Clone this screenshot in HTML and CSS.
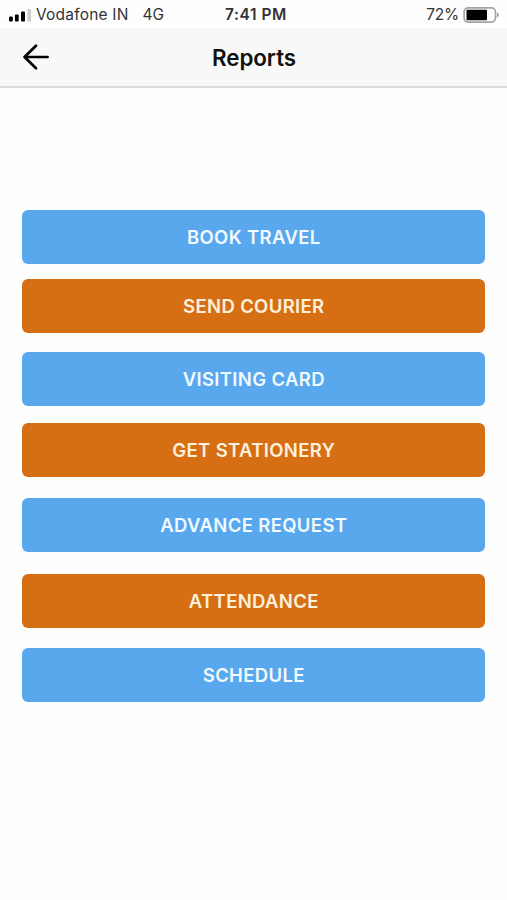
FILE: index.html
```
<!DOCTYPE html>
<html lang="en">
  <head>
    <meta charset="UTF-8" />
    <meta name="viewport" content="width=device-width, initial-scale=1.0" />
    <title>Reports</title>
    <link rel="stylesheet" href="styles.css">
  </head>
  <body>
    <!-- Status bar -->
    <div class="status-bar">
      <div class="carrier">
        <svg class="signal" width="24" height="14" viewBox="0 0 24 14">
          <rect x="1" y="8.5" width="3.8" height="5" rx="1" fill="#000" />
          <rect x="6.9" y="6.5" width="3.8" height="7" rx="1" fill="#000" />
          <rect x="13" y="3.5" width="4" height="10" rx="1" fill="#000" />
          <rect x="19.3" y="1" width="3.8" height="12.5" rx="1" fill="#ccc" />
        </svg>
        <span class="carrier-name">Vodafone IN</span>
        <span class="network">4G</span>
      </div>
      <div class="time">7:41 PM</div>
      <div class="battery">
        <span class="percent">72%</span>
        <svg width="36" height="16" viewBox="0 0 36 16">
          <rect x="1.1" y="0.9" width="31.4" height="14.2" rx="4" fill="#fff" stroke="#a5a5a5" stroke-width="1.7" />
          <rect x="3.5" y="2.8" width="20.5" height="10.4" rx="1" fill="#000" />
          <path d="M34 5.5 Q35.8 6.2 35.8 8 T34 10.5 Z" fill="#999" />
        </svg>
      </div>
    </div>

    <!-- Header -->
    <div class="header">
      <a class="back" href="#" aria-label="Back">
        <svg width="28" height="28" viewBox="0 0 28 28">
          <path d="M25.6 14 H2.5 M14 2.8 L2.5 14 L14 25.2" fill="none" stroke="#000" stroke-width="2.7" stroke-linecap="round" stroke-linejoin="round" />
        </svg>
      </a>
      <h1>Reports</h1>
    </div>

    <!-- Menu -->
    <div class="menu">
      <button class="blue travel">BOOK TRAVEL</button>
      <button class="orange courier">SEND COURIER</button>
      <button class="blue card">VISITING CARD</button>
      <button class="orange stationery">GET STATIONERY</button>
      <button class="blue advance">ADVANCE REQUEST</button>
      <button class="orange attendance">ATTENDANCE</button>
      <button class="blue schedule">SCHEDULE</button>
    </div>
  </body>
</html>
```
FILE: styles.css
```
body {
  margin: 0;
  min-height: 100vh;
  background-color: #fefefe;
  font-family: Inter, "Liberation Sans", sans-serif;
  color: #111;
}
.status-bar {
  display: grid;
  grid-template-columns: 1fr auto 1fr;
  align-items: center;
  height: 28px;
  padding: 2px 8px 0;
  box-sizing: border-box;
  font-size: 15.5px;
  line-height: 20px;
  color: #333;
}
.carrier {
  display: flex;
  align-items: center;
}
.carrier-name {
  margin-left: 4px;
  letter-spacing: 0.2px;
}
.network {
  margin-left: 14px;
}
.time {
  font-weight: 600;
  letter-spacing: 0.55px;
  padding-left: 5px;
}
.battery {
  display: flex;
  align-items: center;
  justify-content: flex-end;
  gap: 4px;
}
.percent {
  letter-spacing: -0.2px;
}
.header {
  display: grid;
  grid-template-columns: 1fr auto 1fr;
  align-items: center;
  height: 60px;
  padding: 0 22px;
  box-sizing: border-box;
  background-color: #f8f8f8;
  border-bottom: 2px solid #dcdcdc;
}
.back {
  display: flex;
}
h1 {
  margin: 0;
  padding: 1px 0 0 1px;
  font-size: 22.3px;
  font-weight: 600;
}
.menu {
  display: flex;
  flex-direction: column;
  padding: 122.4px 21.7px 0 22.3px;
}
button {
  height: 54px;
  padding: 0;
  border: none;
  border-radius: 6px;
  font-family: inherit;
  font-size: 18.5px;
  font-weight: 600;
  letter-spacing: 0.35px;
  cursor: pointer;
}
.blue {
  background-color: #59a7ed;
  color: #f0faff;
}
.orange {
  background-color: #d66f14;
  color: #fdf0dc;
}
.courier {
  margin-top: 15px;
}
.card {
  margin-top: 19px;
}
.stationery {
  margin-top: 17px;
}
.advance {
  margin-top: 20.5px;
}
.attendance {
  margin-top: 22px;
}
.schedule {
  margin-top: 20px;
}
```
